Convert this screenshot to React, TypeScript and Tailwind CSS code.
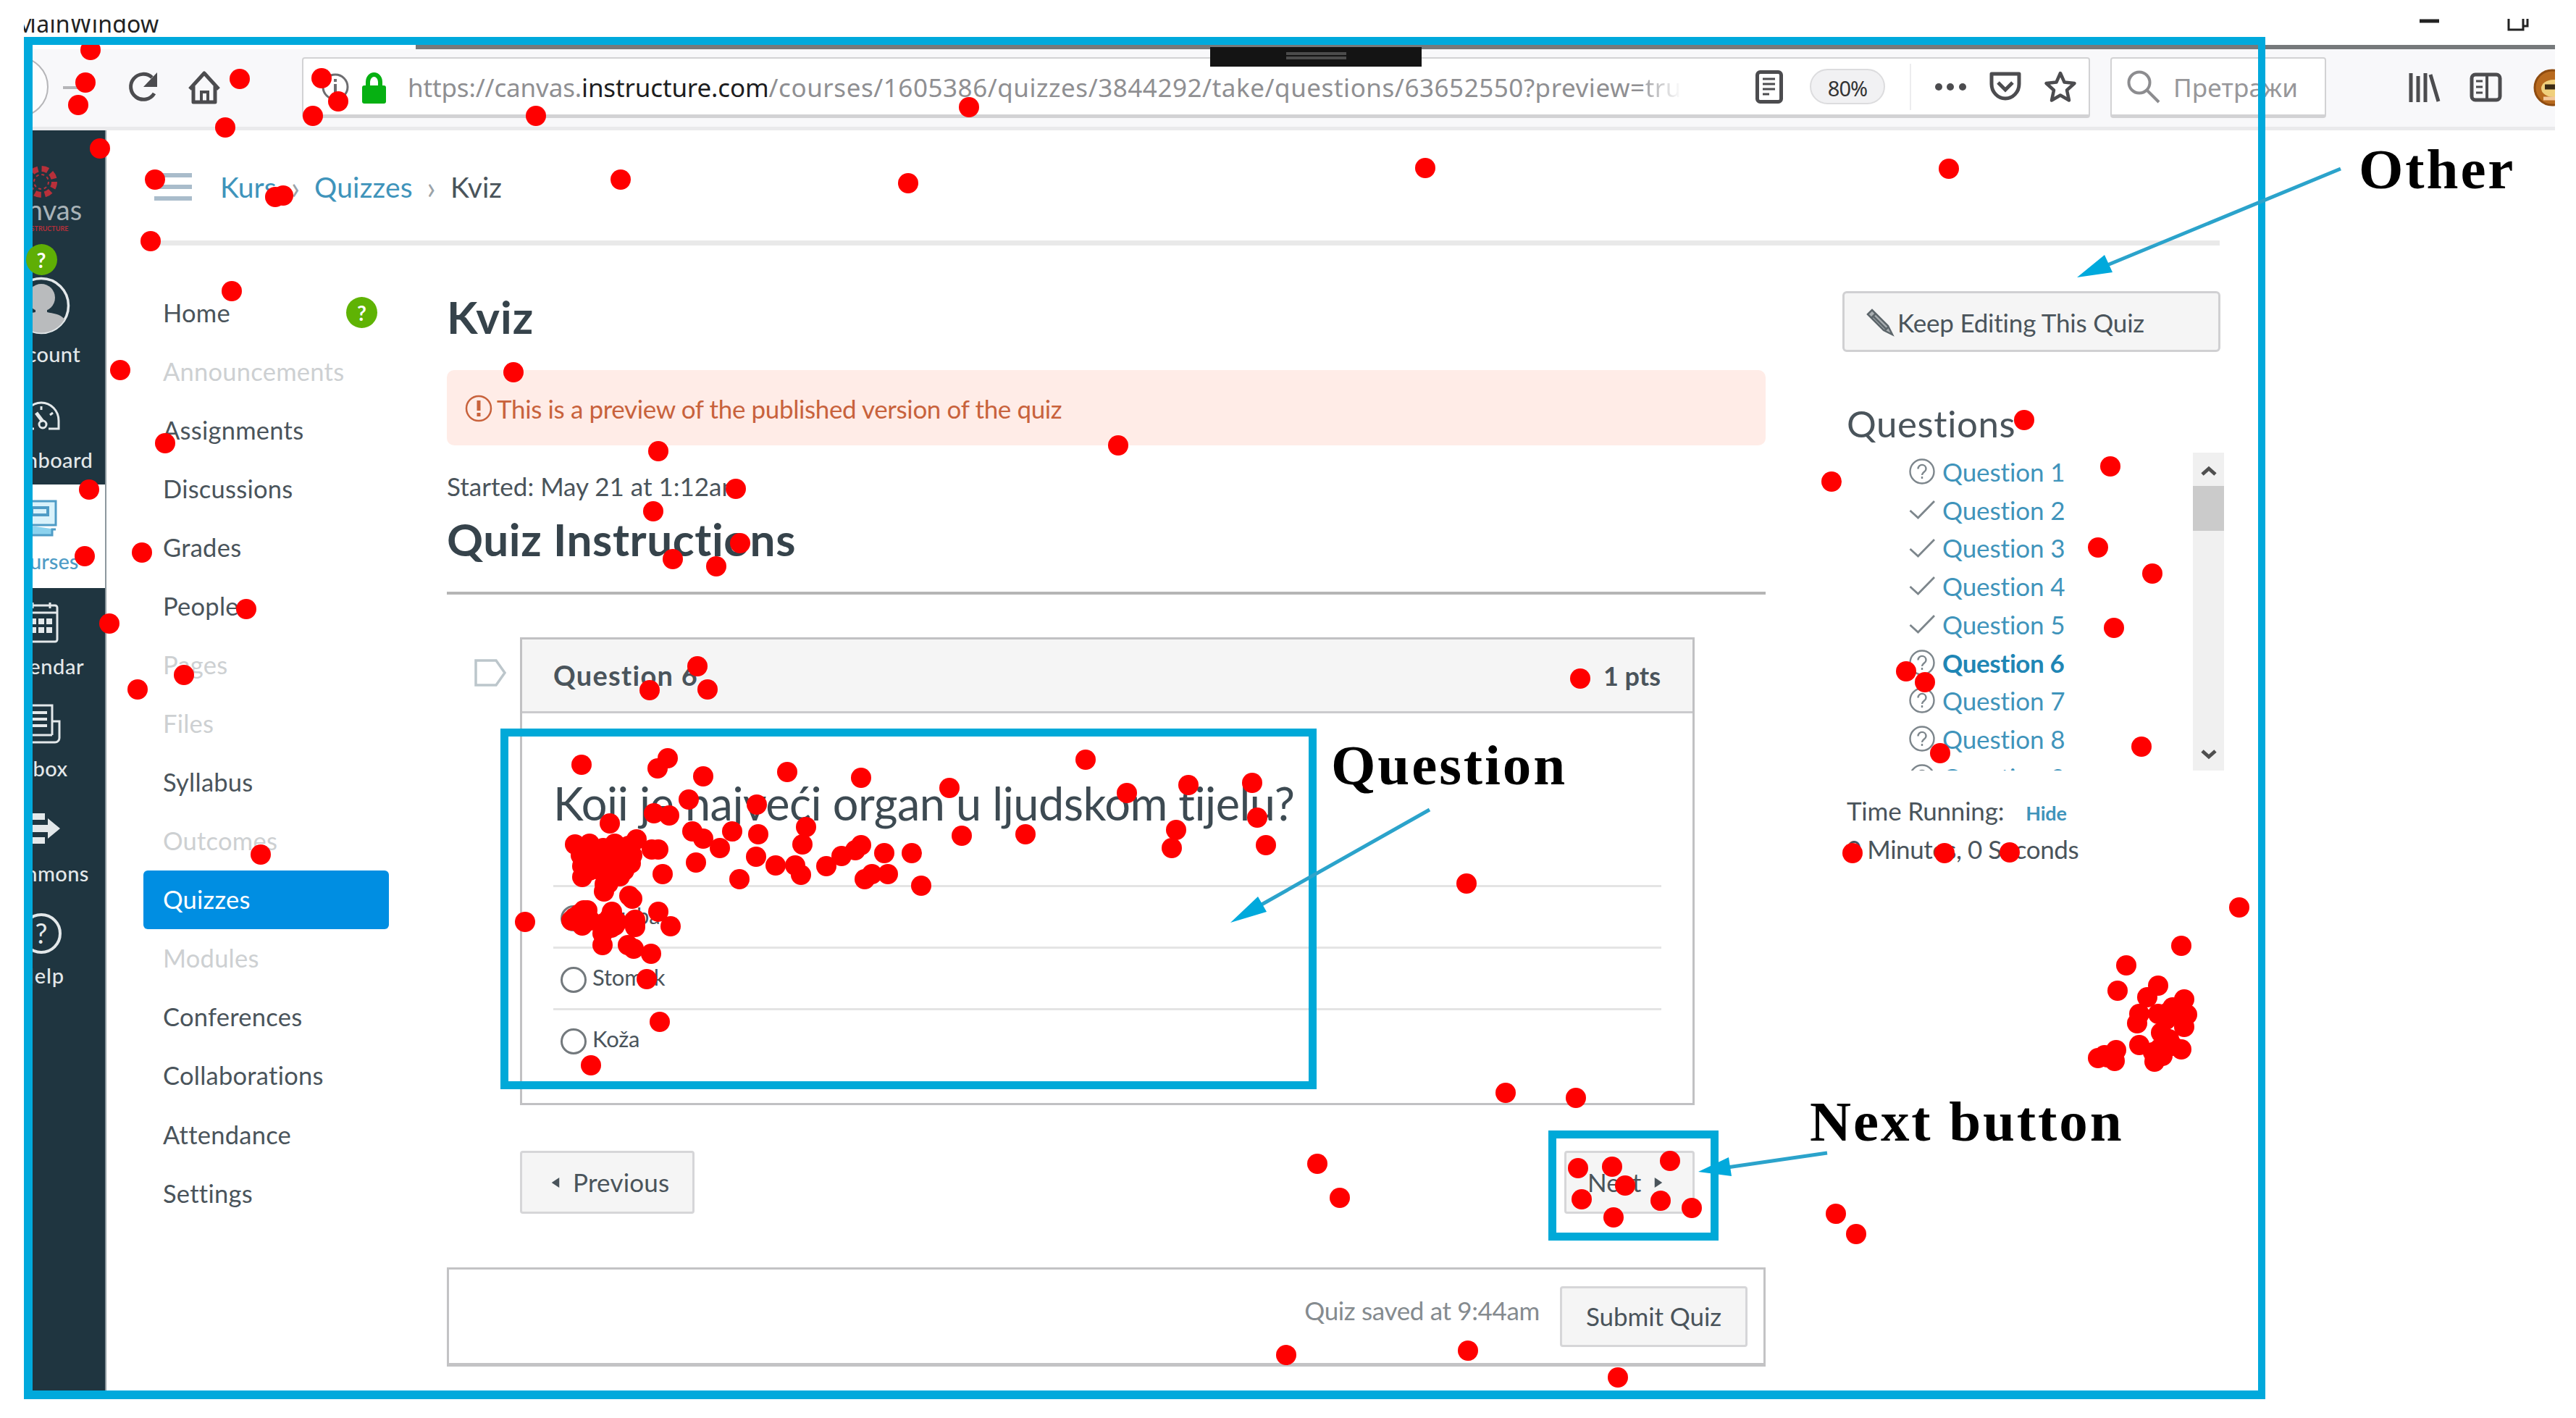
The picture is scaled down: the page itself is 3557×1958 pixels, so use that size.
import React from "react";

const clicks: [number, number][] = [
  [125, 69], [118, 114], [108, 145], [331, 109], [311, 176], [444, 108], [467, 140], [432, 160],
  [740, 160], [138, 205], [214, 248], [380, 272], [391, 270], [208, 333], [857, 248], [320, 402],
  [1338, 148], [1254, 253], [1968, 232], [2691, 233], [166, 511], [228, 612], [123, 676], [117, 768],
  [196, 763], [340, 841], [151, 861], [254, 932], [190, 952], [360, 1180], [709, 514], [909, 623],
  [1544, 615], [1016, 675], [902, 706], [1022, 750], [929, 772], [989, 782], [963, 920], [897, 953],
  [977, 952], [803, 1056], [922, 1047], [908, 1061], [971, 1072], [1087, 1066], [1189, 1074],
  [1311, 1088], [951, 1104], [1045, 1111], [903, 1123], [924, 1126], [842, 1137], [956, 1148],
  [971, 1158], [994, 1171], [1011, 1148], [1047, 1152], [1113, 1142], [1108, 1166], [961, 1191],
  [1044, 1183], [1021, 1214], [1071, 1195], [1098, 1195], [1106, 1208], [1141, 1196], [1162, 1182],
  [1181, 1174], [1189, 1167], [1221, 1178], [1259, 1178], [1194, 1214], [1204, 1207], [1226, 1207],
  [1272, 1223], [1328, 1154], [915, 1207], [794, 1166], [814, 1165], [833, 1171], [849, 1165],
  [879, 1159], [900, 1173], [909, 1173], [802, 1181], [820, 1181], [837, 1181], [855, 1181],
  [873, 1181], [804, 1196], [824, 1192], [842, 1192], [860, 1196], [871, 1192], [804, 1211],
  [812, 1187], [828, 1186], [846, 1186], [862, 1186], [824, 1176], [842, 1174], [860, 1176],
  [868, 1168], [814, 1202], [828, 1201], [850, 1202], [862, 1202], [840, 1220], [804, 1174],
  [837, 1206], [846, 1210], [856, 1210], [835, 1221], [834, 1231], [869, 1237], [873, 1241],
  [806, 1257], [811, 1257], [793, 1267], [789, 1271], [804, 1278], [815, 1271], [845, 1259],
  [800, 1262], [808, 1268], [846, 1266], [852, 1273], [842, 1276], [877, 1275],
  [842, 1267], [835, 1274], [849, 1278], [832, 1289], [832, 1305], [844, 1281], [877, 1270],
  [877, 1280], [909, 1259], [926, 1279], [867, 1305], [875, 1310], [899, 1317], [893, 1352],
  [911, 1411], [816, 1471], [725, 1273], [1499, 1049], [1556, 1095], [1641, 1084], [1729, 1081],
  [1736, 1129], [1416, 1152], [1624, 1146], [1618, 1171], [1748, 1167], [2025, 1220], [2079, 1509],
  [2176, 1516], [1819, 1607], [1850, 1654], [2179, 1613], [2226, 1611], [2306, 1603], [2244, 1637],
  [2184, 1656], [2293, 1658], [2336, 1668], [2228, 1681], [1776, 1871], [2027, 1865], [2234, 1902],
  [2182, 937], [2795, 580], [2914, 644], [2529, 665], [2897, 756], [2972, 792], [2919, 867],
  [2632, 927], [2658, 942], [2679, 1040], [2957, 1031], [2558, 1178], [2685, 1178], [2775, 1177],
  [3092, 1253], [3012, 1306], [2936, 1333], [2924, 1368], [2980, 1361], [2965, 1377], [3016, 1380],
  [2954, 1400], [2951, 1413], [2980, 1400], [3000, 1391], [3020, 1401], [2991, 1408], [3016, 1418],
  [3008, 1398], [2992, 1399], [2982, 1448], [3000, 1444], [2910, 1460],
  [2984, 1426], [2954, 1443], [2995, 1435], [2989, 1444], [3012, 1449], [2973, 1453], [2975, 1466],
  [2986, 1458], [2922, 1450], [2920, 1465], [2897, 1461], [2906, 1457], [2535, 1676], [2563, 1704],
];

const courseLinks = [
  { title: "Home" },
  { title: "Announcements", muted: true },
  { title: "Assignments" },
  { title: "Discussions" },
  { title: "Grades" },
  { title: "People" },
  { title: "Pages", muted: true },
  { title: "Files", muted: true },
  { title: "Syllabus" },
  { title: "Outcomes", muted: true },
  { title: "Quizzes", active: true },
  { title: "Modules", muted: true },
  { title: "Conferences" },
  { title: "Collaborations" },
  { title: "Attendance" },
  { title: "Settings" },
];

const questions = [
  { title: "Question 1" },
  { title: "Question 2", done: true },
  { title: "Question 3", done: true },
  { title: "Question 4", done: true },
  { title: "Question 5", done: true },
  { title: "Question 6", current: true },
  { title: "Question 7" },
  { title: "Question 8" },
  { title: "Question 9" },
];

const HelpCircle = ({ className }: { className: string }) => (
  <svg viewBox="0 0 36 36" className={className} fill="none" stroke="currentColor" strokeWidth="2.4">
    <circle cx="18" cy="18" r="16.5" />
    <path d="M12.5 14.5c0-7.500 11-7.500 11 0 0 4.500-5.500 4-5.500 8.500" />
    <path d="M18 25v3" />
  </svg>
);

const Check = () => (
  <svg viewBox="0 0 36 36" className="size-9 text-[#7d868c]" fill="none" stroke="currentColor">
    <path d="M1.500 19l11 10L35 6" strokeWidth="2.800" />
  </svg>
);

const Toolbar = () => (
  <div className="flex h-28 items-start overflow-hidden border-b-[5px] border-[#eaeaec] bg-[#f8f8fa] pt-[11px] font-['Noto_Sans',sans-serif]">
    <svg viewBox="0 0 384 84" className="h-[84px] w-96 shrink-0" fill="none" stroke="#4c4c4f">
      <circle cx="-8" cy="41" r="41" stroke="#b5b5b8" strokeWidth="2" fill="#fcfcfd" />
      <path d="M54 42h26" stroke="#b5b5b8" strokeWidth="4" />
      <path d="M180 50a17.500 17.500 0 1 1-3-22" strokeWidth="5" />
      <path d="M184 21v20h-19z" fill="#4c4c4f" stroke="none" />
      <path d="M229 44l20-22 20 22M234 40v22h30V40" strokeWidth="5" strokeLinejoin="round" />
      <path d="M245 62V48h9v14" strokeWidth="4" />
    </svg>
    <div className="flex h-[84px] w-[2469px] shrink-0 items-center rounded-[4px] border-2 border-b-[5px] border-[#d2d2d4] bg-white">
      <svg viewBox="0 0 120 80" className="ml-6 h-20 w-[120px] shrink-0" fill="none">
        <circle cx="20" cy="40" r="17" stroke="#6d6d70" strokeWidth="3" />
        <path d="M20 29v4M20 36v14" stroke="#6d6d70" strokeWidth="4" />
        <path d="M65 41v-8a8.500 10 0 0 1 17 0v8" stroke="#06b012" strokeWidth="6" />
        <rect x="57" y="38" width="33" height="25" rx="3" fill="#06b012" />
      </svg>
      <div className="mt-1 w-[1762px] shrink-0 overflow-hidden text-[35px] tracking-[0.540px] whitespace-nowrap text-[#8f8f92]">
        <span className="tracking-[-0.150px]">
          https://canvas.<span className="text-[#1d1d20]">instructure.com</span>
        </span>
        /courses/1605386/quizzes/3844292/take/questions/63652550?preview=
        <span className="bg-gradient-to-r from-[#a5a5a8] to-white bg-clip-text text-transparent">tru</span>
      </div>
      <svg viewBox="0 0 38 46" className="ml-[99px] h-[46px] w-[38px] shrink-0" fill="none" stroke="#4c4c4f">
        <rect x="2.500" y="2.500" width="33" height="41" rx="4" strokeWidth="5" />
        <path d="M10 12h17M10 19h17M10 26h17M10 33h9" strokeWidth="3" />
      </svg>
      <div className="ml-[37px] flex h-[49px] w-[104px] shrink-0 items-center justify-center rounded-full border-2 border-[#dcdcde] bg-[#f1f1f3] pt-1 text-[29px] tracking-[-1px] text-[#333]">
        80%
      </div>
      <div className="ml-[34px] h-16 w-[2px] shrink-0 bg-[#ececee]"></div>
      <svg viewBox="0 0 220 50" className="ml-6 h-[50px] w-[220px] shrink-0" fill="none" stroke="#4c4c4f">
        <g fill="#4c4c4f" stroke="none">
          <circle cx="14" cy="25" r="5" />
          <circle cx="30" cy="25" r="5" />
          <circle cx="47" cy="25" r="5" />
        </g>
        <path d="M87 7h38v14a19 20 0 0 1-38 0z" strokeWidth="5" strokeLinejoin="round" />
        <path d="M96 19l10 10 10-10" strokeWidth="5" />
        <path
          d="M182 6l5.500 12.500 14 1.500-10.500 9.500 3 14-12-7-12 7 3-14-10.500-9.500 14-1.500z"
          strokeWidth="4.500"
          strokeLinejoin="round"
        />
      </svg>
    </div>
    <div className="ml-[28px] flex h-[84px] w-[298px] shrink-0 items-center rounded-[4px] border-2 border-b-[5px] border-[#d2d2d4] bg-white">
      <svg viewBox="0 0 46 46" className="ml-[21px] size-[46px]" fill="none" stroke="#8c8c8f" strokeWidth="4">
        <circle cx="17" cy="17" r="14.500" />
        <path d="M27 27l17 17" />
      </svg>
      <span className="mt-1 ml-[18px] text-[35px] tracking-[0.200px] text-[#97979a]">Претражи</span>
    </div>
    <svg viewBox="0 0 316 84" className="h-[84px] w-[316px] shrink-0" fill="none" stroke="#4c4c4f">
      <path d="M117 22v40M127 26v36M137 22v40M144 24l11 37" strokeWidth="5" />
      <rect x="201" y="24" width="39" height="35" rx="5" strokeWidth="5" />
      <path d="M222 24v35" strokeWidth="4" />
      <path d="M207 33h9M207 41h9M207 49h9" strokeWidth="3" />
      <circle cx="312" cy="42" r="24" fill="#b86a1e" stroke="#8f4c10" strokeWidth="3" />
      <ellipse cx="314" cy="43" rx="17" ry="12" fill="#f0cf7c" stroke="none" />
      <path d="M302 41h14" stroke="#3a2a14" strokeWidth="7" />
      <path d="M300 57h16" stroke="#f3c79a" strokeWidth="5" />
    </svg>
  </div>
);

const NavLabel = ({ children, className = "" }: { children: string; className?: string }) => (
  <div className={`text-center text-[29px] leading-9 font-medium ${className}`}>{children}</div>
);

const GlobalNav = () => (
  <nav className="w-[114px] shrink-0 overflow-hidden border-r-2 border-[#8d989e] bg-[#1f3540] text-[#e3e8ea]">
    <div className="-ml-[66px] flex h-full w-[180px] flex-col items-center">
      <svg viewBox="0 0 50 50" className="mt-[46px] size-[50px] shrink-0">
        <circle cx="25" cy="25" r="18" fill="none" stroke="#b8303a" strokeWidth="8" strokeDasharray="9 5.140" />
        <circle cx="25" cy="25" r="10" fill="none" stroke="#b8303a" strokeWidth="2" strokeDasharray="4 3.850" />
      </svg>
      <div className="-mt-[4px] h-[38px] text-[38px] leading-[34px] text-[#a9b3b8]">canvas</div>
      <div className="mt-[1px] text-[9px] leading-[10px] font-bold text-[#b8303a]">BY INSTRUCTURE</div>
      <div className="relative z-10 mt-[16px] flex size-[43px] shrink-0 items-center justify-center rounded-full bg-[#5fae05] text-[28px] font-bold text-white">
        ?
      </div>
      <svg viewBox="0 0 80 80" className="mt-[2px] size-20 shrink-0">
        <circle cx="40" cy="40" r="37.500" fill="#1f3540" stroke="#e3e8ea" strokeWidth="3.500" />
        <circle cx="40" cy="29" r="19" fill="#b9bbbd" />
        <path d="M8 59c6-8 16-8 24-10v-8h16v8c8 2 18 2 24 10a37 37 0 0 1-64 0z" fill="#b9bbbd" />
      </svg>
      <NavLabel className="mt-[9px] tracking-[0.300px]">Account</NavLabel>
      <svg viewBox="0 0 54 42" className="mt-[46px] h-[42px] w-[54px] shrink-0" fill="none" stroke="currentColor">
        <path d="M17 39H3V28a24 25 0 0 1 48 0v11H37" strokeWidth="3" />
        <path d="M27 8v5M11 25H6M43 17l-4 3" strokeWidth="3" />
        <path d="M20 17l9 12" strokeWidth="5" />
        <circle cx="29" cy="33" r="5" strokeWidth="3" />
      </svg>
      <NavLabel className="mt-[22px] tracking-[0.400px]">Dashboard</NavLabel>
      <div className="mt-[16px] flex h-[143px] w-full shrink-0 flex-col items-center bg-white text-[#4f9cc6]">
        <svg viewBox="0 0 46 54" className="mt-[20px] h-[54px] w-[46px]" fill="none" stroke="currentColor" strokeWidth="3">
          <rect x="2" y="3" width="41" height="33" fill="#d9f2fb" />
          <path d="M10 12h22v10H10z" strokeWidth="4" />
          <path d="M2 36v14h36v-8h5" fill="#8cd2ee" />
        </svg>
        <NavLabel className="mt-[14px]">Courses</NavLabel>
      </div>
      <svg viewBox="0 0 48 58" className="mt-[19px] h-[58px] w-12 shrink-0" fill="none" stroke="currentColor" strokeWidth="3">
        <rect x="2" y="5" width="44" height="50" rx="3" />
        <path d="M2 15h44M12 1v8M36 1v8" />
        <path d="M9 27h30M9 39h30" strokeWidth="8" strokeDasharray="8 3" />
      </svg>
      <NavLabel className="mt-[13px] tracking-[0.600px]">Calendar</NavLabel>
      <svg viewBox="0 0 54 56" className="mt-[34px] h-14 w-[54px] shrink-0" fill="none" stroke="currentColor" strokeWidth="3">
        <path d="M42 43V2H8v51h38a6 6 0 0 0 6-6V24H42M8 43h34" />
        <path d="M15 12h20M15 21h20M15 30h20" strokeWidth="4" />
      </svg>
      <NavLabel className="mt-[15px] tracking-[0.500px]">Inbox</NavLabel>
      <svg viewBox="0 0 54 44" className="mt-[43px] h-11 w-[54px] shrink-0" fill="currentColor">
        <path d="M2 1h30v9H2zM2 34h30v9H2zM2 17h34V8l17 14-17 14v-9H2z" />
      </svg>
      <NavLabel className="mt-[22px] tracking-[0.400px]">Commons</NavLabel>
      <div className="mt-[37px] size-14 shrink-0 rounded-full border-[4px] border-current text-center text-[38px] leading-[46px]">?</div>
      <NavLabel className="mt-[12px] tracking-[0.900px]">Help</NavLabel>
    </div>
  </nav>
);

const CourseNav = () => (
  <ul className="mt-[52px] ml-[51px] w-[339px] shrink-0 text-[34.500px] tracking-[0.250px] text-[#4a545b]">
    {courseLinks.map((item) => (
      <li
        key={item.title}
        className={`flex h-[81.070px] items-center justify-between pr-4 pl-[27px] ${
          item.active ? "rounded-[6px] bg-[#008ee2] text-white" : ""
        } ${item.muted ? "text-[#cdd0d2]" : ""}`}
      >
        {item.title}
        {item.title === "Home" && (
          <span className="flex size-[43px] items-center justify-center rounded-full bg-[#5fb304] text-[28px] font-bold text-white">
            ?
          </span>
        )}
      </li>
    ))}
  </ul>
);

const Answer = ({ text }: { text: string }) => (
  <label className="flex h-[85px] items-center border-t-[3px] border-[#e4e4e4] pl-[10px] text-[31px] tracking-[-0.200px] text-[#4a545b]">
    <span className="mt-[4px] mr-2 size-9 rounded-full border-[3px] border-[#73797d] bg-white"></span>
    <span className="-mt-1">{text}</span>
  </label>
);

const Quiz = () => (
  <main className="mt-[58px] ml-20 w-[1821px] shrink-0 text-[#4a545b]">
    <h1 className="h-20 text-[62px] leading-20 font-bold tracking-[1px] text-[#36434b]">Kviz</h1>
    <div className="mt-[34px] flex h-[104px] items-center rounded-[10px] bg-[#ffece7] pt-[2px] pl-[25px] text-[35px] tracking-[-0.380px] text-[#c8623c]">
      <svg viewBox="0 0 38 38" className="mr-[6px] size-[38px]" fill="none" stroke="currentColor">
        <circle cx="19" cy="19" r="17" strokeWidth="2.500" />
        <path d="M19 8v14M19 25v5" strokeWidth="5" />
      </svg>
      This is a preview of the published version of the quiz
    </div>
    <p className="mt-[31px] h-[50px] text-[35px] leading-[50px]">Started: May 21 at 1:12am</p>
    <h2 className="mt-2 h-20 text-[62px] leading-20 font-bold tracking-[0.600px] text-[#36434b]">Quiz Instructions</h2>
    <div className="mt-[33px] h-1 bg-[#b5b5b5]"></div>
    <div className="mt-[59px] flex pl-[37px]">
      <svg viewBox="0 0 46 40" className="mt-[29px] h-10 w-[46px]" fill="none" stroke="#bcc6cb" strokeWidth="3.500">
        <path d="M3 3h28l12 17-12 17H3z" />
      </svg>
      <section className="ml-[18px] h-[646px] w-[1622px] border-[3px] border-[#c1c1c3]">
        <div className="flex h-[102px] items-center justify-between border-b-[3px] border-[#cbcbcd] bg-[#f5f5f5] pr-[44px] pl-[43px] text-[38px] font-bold">
          <span className="tracking-[1.300px]">Question 6</span>
          <span className="text-[36px]">1 pts</span>
        </div>
        <div className="px-[43px]">
          <p className="h-[237px] pt-[9px] text-[63px] leading-[230px] tracking-[-0.500px] whitespace-nowrap text-[#3d4a52]">
            Koji je najveći organ u ljudskom tijelu?
          </p>
          <Answer text="Utroba" />
          <Answer text="Stomak" />
          <Answer text="Koža" />
        </div>
      </section>
    </div>
    <div className="mt-[63px] flex justify-between pr-[98px] pl-[101px] text-[35px]">
      <button className="flex h-[87px] w-[241px] items-center rounded-[4px] border-[3px] border-[#d6d6d8] bg-[#f5f5f5] pl-[40px] tracking-[0.200px]">
        <svg viewBox="0 0 12 16" className="mr-[18px] h-[14px] w-3" fill="currentColor">
          <path d="M12 0v16L0 8z" />
        </svg>
        Previous
      </button>
      <button className="flex h-[87px] w-[180px] items-center rounded-[4px] border-[3px] border-[#d6d6d8] bg-[#f5f5f5] pl-[29px]">
        Next
        <svg viewBox="0 0 12 16" className="ml-[18px] h-[14px] w-3" fill="currentColor">
          <path d="M0 0v16l12-8z" />
        </svg>
      </button>
    </div>
    <div className="mt-[74px] flex h-[137px] items-center justify-end border-[3px] border-b-[5px] border-[#c3c3c5] pr-[22px]">
      <span className="-mt-4 mr-7 text-[35px] tracking-[-0.350px] text-[#858b8f]">Quiz saved at 9:44am</span>
      <button className="h-[84px] w-[259px] rounded-[4px] border-[3px] border-[#d6d6d8] bg-[#f5f5f5] text-[35px] tracking-[-0.100px]">
        Submit Quiz
      </button>
    </div>
  </main>
);

const Sidebar = () => (
  <aside className="mt-[63px] ml-[106px] w-[527px] shrink-0 text-[35px] text-[#4a545b]">
    <button className="flex h-[84px] w-[522px] items-center rounded-[6px] border-[3px] border-[#d0d0d2] bg-[#f5f5f5] pt-[2px] pl-[29px] tracking-[-0.200px]">
      <svg viewBox="0 0 40 40" className="mr-1 size-10" fill="#a9aeb1" stroke="#5d666b" strokeWidth="2.500">
        <path d="M3 9l6-6 22 22 6 12-12-6z" />
        <path d="M8 14l6-6M26 32l6-6M10 11l19 19" />
      </svg>
      Keep Editing This Quiz
    </button>
    <h3 className="mt-[64px] h-[70px] pl-[6px] text-[51px] leading-[70px] tracking-[0.600px]">Questions</h3>
    <div className="mt-[5px] flex h-[439px] justify-between overflow-hidden">
      <ul className="pl-[92px]">
        {questions.map((q) => (
          <li key={q.title} className="flex h-[52.700px] items-center gap-[10px] text-[#3f94bb]">
            {q.done ? <Check /> : <HelpCircle className="size-9 text-[#7d868c]" />}
            <span className={q.current ? "font-bold tracking-[-0.400px] text-[#1f86b5]" : "tracking-[-0.100px]"}>{q.title}</span>
          </li>
        ))}
      </ul>
      <div className="flex w-[43px] flex-col items-center bg-[#f0f0f0]">
        <svg viewBox="0 0 22 14" className="mt-[18px] h-[14px] w-[22px]" fill="none" stroke="#4f4f4f" strokeWidth="5">
          <path d="M2 12l9-8 9 8" />
        </svg>
        <div className="mt-[14px] h-[62px] w-full bg-[#cbcbcb]"></div>
        <svg viewBox="0 0 22 14" className="mt-auto mb-[15px] h-[14px] w-[22px]" fill="none" stroke="#4f4f4f" strokeWidth="5">
          <path d="M2 2l9 8 9-8" />
        </svg>
      </div>
    </div>
    <p className="mt-7 flex h-[54px] items-baseline pl-[6px] leading-[54px] tracking-[-0.200px]">
      Time Running:
      <span className="ml-[30px] text-[27px] font-bold text-[#3f94bb]">Hide</span>
    </p>
    <p className="-mt-[1px] pl-[6px] leading-[54px] tracking-[-0.450px] whitespace-nowrap">0 Minutes, 0 Seconds</p>
  </aside>
);

/* click points, area frames and their captions */
const Annotations = () => (
  <div className="absolute inset-0 font-['Liberation_Serif',serif] text-[79px] leading-[90px] font-bold tracking-[2.900px] whitespace-nowrap text-black">
    <svg viewBox="0 0 3557 1958" className="absolute inset-0 h-full w-full" fill="#ff0000">
      {clicks.map(([x, y], i) => (
        <circle key={i} cx={x} cy={y} r="14" />
      ))}
    </svg>
    <div className="absolute top-[51px] left-[33px] h-[1881px] w-[3095px] border-[11px] border-r-[10px] border-b-[12px] border-l-[12px] border-[#00a9dc]"></div>
    <div className="absolute top-[1006px] left-[691px] h-[498px] w-[1127px] border-[11px] border-[#00a9d8]"></div>
    <div className="absolute top-[1561px] left-[2138px] h-[152px] w-[235px] border-[11px] border-[#00a9d8]"></div>
    <div className="absolute top-[65px] left-[1671px] flex h-[27px] w-[292px] flex-col items-center gap-[2px] bg-[#141414] pt-[7px]">
      <div className="h-1 w-[83px] bg-[#4c4c4c]"></div>
      <div className="h-1 w-[83px] bg-[#4c4c4c]"></div>
    </div>
    <svg viewBox="0 0 3557 1958" className="absolute inset-0 h-full w-full" fill="#00a9dc" stroke="none">
      <path d="M3232 233L2905 368M1974 1118L1735 1253M2523 1592L2385 1612" stroke="#2ba3cb" strokeWidth="5" />
      <path d="M2868 383l38-31 11 24zM1699 1274l38-36 12 21zM2345 1618l42-20 4 26z" />
    </svg>
    <span className="absolute top-[189px] left-[3257px]">Other</span>
    <span className="absolute top-[1012px] left-[1838px]">Question</span>
    <span className="absolute top-[1504px] left-[2499px]">Next button</span>
  </div>
);

const App = () => {
  return (
    <div className="relative h-[1958px] w-[3557px] overflow-hidden bg-white pt-[26px] pl-[33px] font-['Lato',sans-serif] [font-variant-ligatures:none]">
      <div className="flex h-[1906px] w-[3495px] flex-col overflow-hidden">
        <div className="flex h-9 shrink-0 justify-between overflow-hidden font-['Noto_Sans',sans-serif]">
          <span className="-ml-3 text-[32px] leading-[14px] tracking-[0.200px] text-[#222]">MainWindow</span>
          <svg viewBox="0 0 187 36" className="h-9 w-[187px]" fill="none" stroke="#222">
            <path d="M0 3h27" strokeWidth="5" />
            <path d="M123 0v15h20V0M143 10h6V0" strokeWidth="3" />
          </svg>
        </div>
        <div className="flex h-[6px] shrink-0">
          <div className="w-[541px] bg-white"></div>
          <div className="grow bg-[#76797b]"></div>
        </div>
        <Toolbar />
        <div className="flex grow">
          <GlobalNav />
          <div className="grow">
            <div className="flex h-[152px] items-center pt-1 pl-[66px] text-[39px] text-[#3f94bb]">
              <div className="mr-[39px] flex w-[52px] flex-col gap-[10px]">
                <div className="h-[6px] bg-[#a9bccb]"></div>
                <div className="h-[6px] bg-[#a9bccb]"></div>
                <div className="h-[6px] bg-[#a9bccb]"></div>
              </div>
              <span className="w-[78px]">Kurs</span>
              <span className="w-[52px] text-center text-[44px] leading-10 text-[#9ba3a8]">›</span>
              <span className="w-[135px] tracking-[0.200px]">Quizzes</span>
              <span className="w-[53px] text-center text-[44px] leading-10 text-[#9ba3a8]">›</span>
              <span className="text-[#4a545b]">Kviz</span>
            </div>
            <div className="ml-[66px] h-[7px] w-[2852px] bg-[#e9e9e9]"></div>
            <div className="flex">
              <CourseNav />
              <Quiz />
              <Sidebar />
            </div>
          </div>
        </div>
      </div>
      <Annotations />
    </div>
  );
};

export default App;
